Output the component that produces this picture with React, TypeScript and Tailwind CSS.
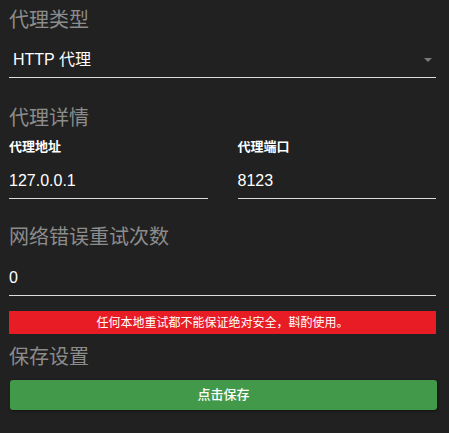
import React from "react";

const font = { fontFamily: '"Liberation Sans", "Noto Sans CJK SC", sans-serif' };

function Heading({ children, className = "" }: { children: React.ReactNode; className?: string }) {
  return (
    <div className={`h-[40px] flex items-center text-[20px] text-[#8c8c8c] ${className}`}>
      {children}
    </div>
  );
}

function Field({ value, className = "" }: { value: string; className?: string }) {
  return (
    <div className={`flex items-center border-b border-[#dcdcdc] text-[16px] text-white ${className}`}>
      {value}
    </div>
  );
}

export default function App() {
  return (
    <div className="w-[449px] h-[433px] bg-[#212121] pl-[9px] pr-[13px] overflow-hidden" style={font}>
      {/* 代理类型 */}
      <Heading>代理类型</Heading>
      <div className="h-[38px] pt-[3px] pl-[4px] pr-[4px] flex items-center justify-between border-b border-[#dcdcdc] text-[16px] text-white">
        <span>HTTP 代理</span>
        <span className="w-0 h-0 border-l-[4px] border-r-[4px] border-t-[4px] border-l-transparent border-r-transparent border-t-[#7a7a7a]" />
      </div>

      {/* 代理详情 */}
      <Heading className="mt-[20px]">代理详情</Heading>
      <div className="grid grid-cols-2 gap-x-[30px]">
        <div className="h-[18px] flex items-center text-[13px] font-semibold text-white">代理地址</div>
        <div className="h-[18px] flex items-center text-[13px] font-semibold text-white">代理端口</div>
        <Field value="127.0.0.1" className="h-[43px] pt-[8px]" />
        <Field value="8123" className="h-[43px] pt-[8px]" />
      </div>

      {/* 网络错误重试次数 */}
      <Heading className="mt-[18px]">网络错误重试次数</Heading>
      <Field value="0" className="h-[39px] pt-[4px]" />
      <div className="mt-[15px] h-[23px] bg-[#e81c24] flex items-center justify-center text-[12px] text-white">
        任何本地重试都不能保证绝对安全，斟酌使用。
      </div>

      {/* 保存设置 */}
      <Heading className="mt-[3px]">保存设置</Heading>
      <button
        className="mt-[3px] ml-[1px] w-[427px] h-[30px] rounded-[3px] bg-[#43994a] text-white text-[13px] font-medium shadow-[1px_1px_3px_rgba(0,0,0,0.5)] flex items-center justify-center"
        style={font}
      >
        点击保存
      </button>
    </div>
  );
}
